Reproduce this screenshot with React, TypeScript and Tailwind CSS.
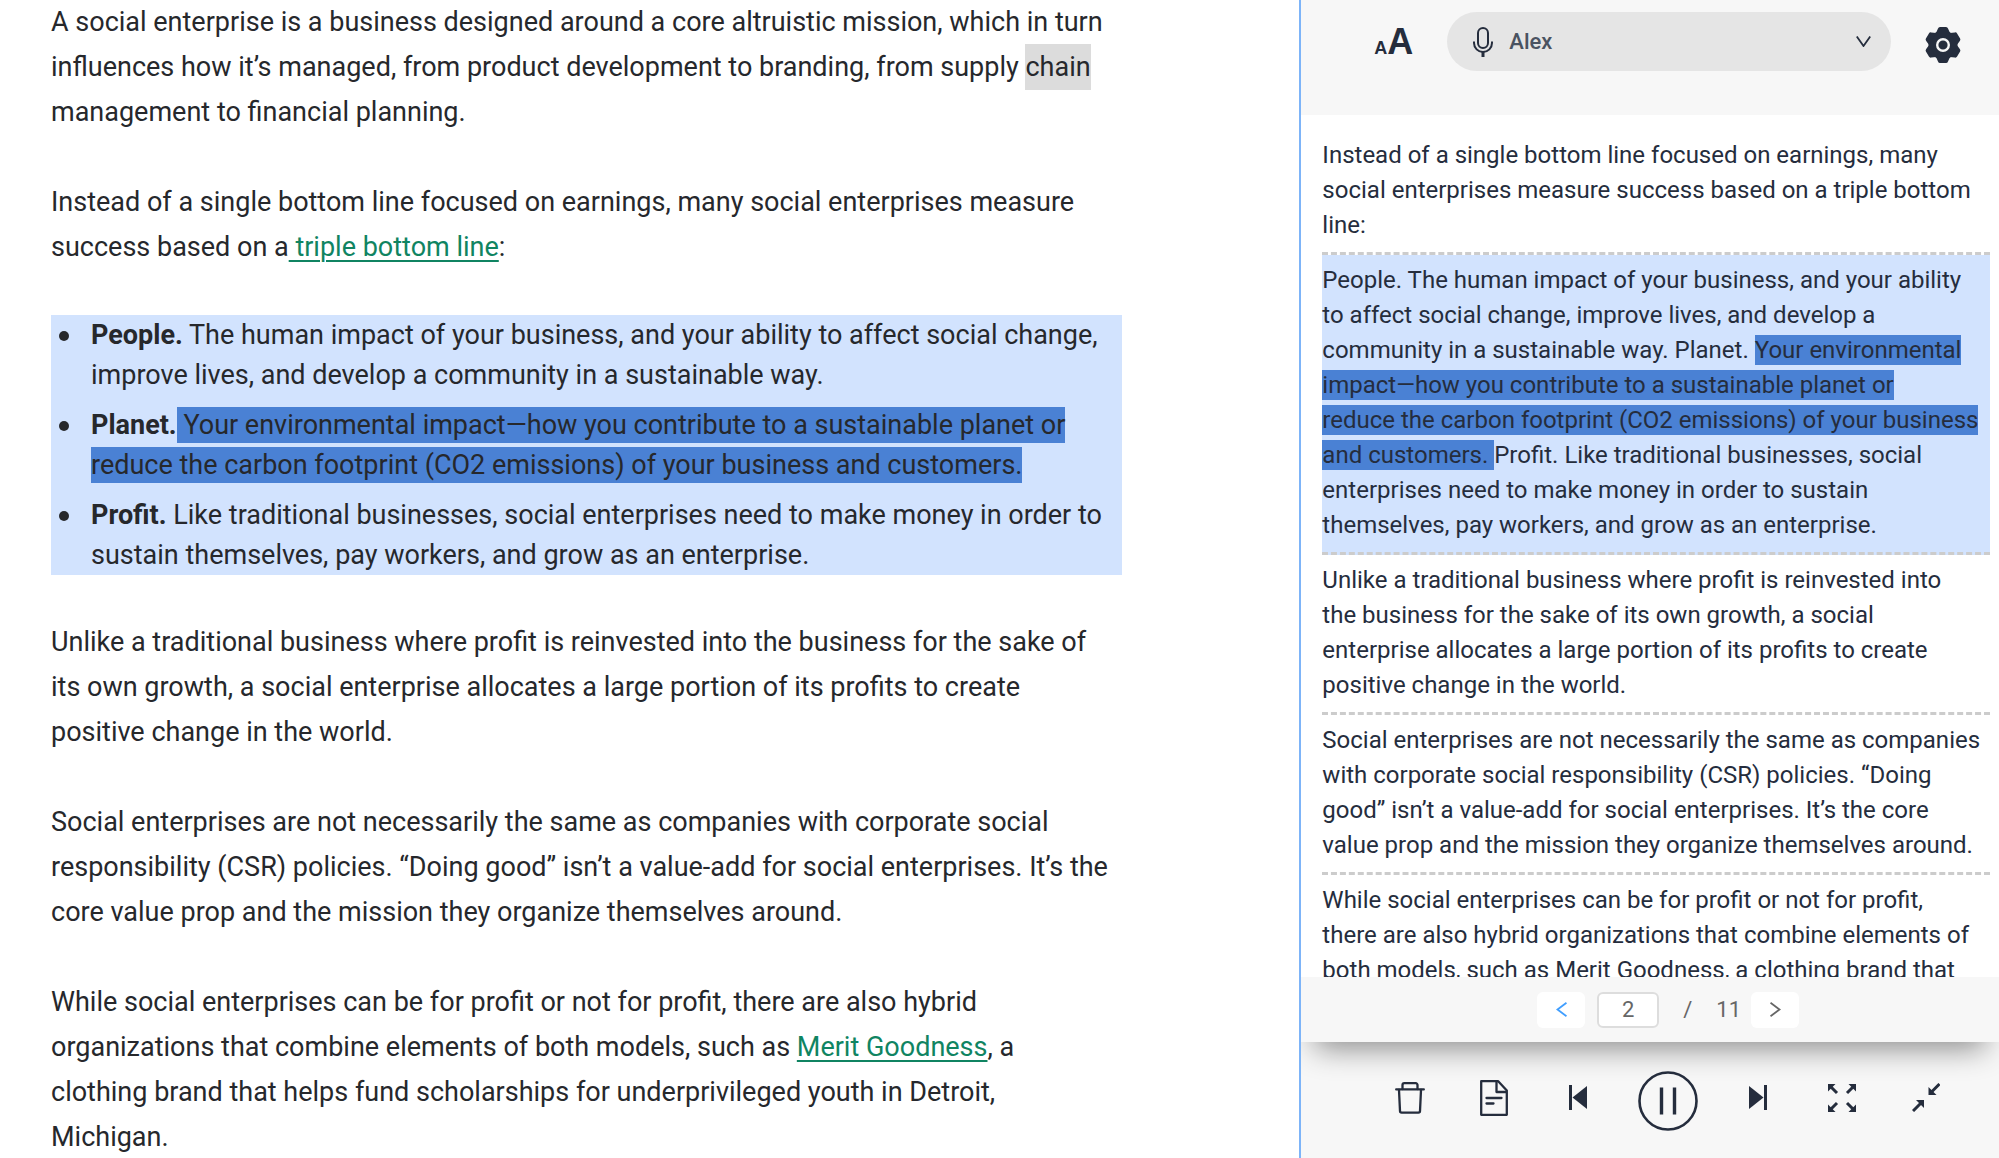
import React, { useState } from "react";

type ReaderBlock = {
    text: string;
    spoken?: string;
    rest?: string;
    active?: boolean;
};

const TOTAL_PAGES = 11;

const voices = ["Alex", "Samantha", "Victoria"];

// line breaks are kept by whitespace-pre-line in the list
const blocks: ReaderBlock[] = [
    {
        text: "Instead of a single bottom line focused on earnings, many\nsocial enterprises measure success based on a triple bottom\nline:",
    },
    {
        text: "People. The human impact of your business, and your ability\nto affect social change, improve lives, and develop a\ncommunity in a sustainable way. Planet. ",
        spoken: "Your environmental\nimpact—how you contribute to a sustainable planet or\nreduce the carbon footprint (CO2 emissions) of your business\nand customers. ",
        rest: "Profit. Like traditional businesses, social\nenterprises need to make money in order to sustain\nthemselves, pay workers, and grow as an enterprise.",
        active: true,
    },
    {
        text: "Unlike a traditional business where profit is reinvested into\nthe business for the sake of its own growth, a social\nenterprise allocates a large portion of its profits to create\npositive change in the world.",
    },
    {
        text: "Social enterprises are not necessarily the same as companies\nwith corporate social responsibility (CSR) policies. “Doing\ngood” isn’t a value-add for social enterprises. It’s the core\nvalue prop and the mission they organize themselves around.",
    },
    {
        text: "While social enterprises can be for profit or not for profit,\nthere are also hybrid organizations that combine elements of\nboth models, such as Merit Goodness, a clothing brand that",
    },
];

const linkStyle = "text-[#108462] underline decoration-2 underline-offset-4";
const bulletStyle = "flex before:ml-2 before:mr-[22px] before:mt-4 before:size-2.5 before:shrink-0 before:rounded-full before:bg-[#26282c]";
const toolButton = "flex h-[53px] w-12 items-center justify-center";

function MicIcon() {
    return (
        <svg width="20" height="30" viewBox="0 0 20 30" fill="none" stroke="currentColor" strokeWidth="2">
            <rect x="5" y="1" width="10" height="20" rx="5" />
            <path d="M1 14.5v1.5a9 9 0 0 0 18 0v-1.5" />
            <path d="M10 25v5" strokeWidth="3" />
        </svg>
    );
}

function GearIcon() {
    return (
        <svg width="36" height="36" viewBox="-18 -18 36 36" fill="currentColor">
            <circle r="14.5" />
            {[0, 60, 120, 180, 240, 300].map((angle) => (
                <path key={angle} d="M-7 -12L-5 -16.5Q-4.5 -18 -3 -18H3Q4.5 -18 5 -16.5L7 -12Z" transform={`rotate(${angle})`} />
            ))}
            <circle r="5.8" fill="none" stroke="#f7f7f7" strokeWidth="2.4" />
        </svg>
    );
}

function TrashIcon() {
    return (
        <svg width="30" height="32" viewBox="0 0 30 32" fill="none" stroke="currentColor" strokeWidth="2.3" strokeLinecap="round" strokeLinejoin="round">
            <path d="M1.2 7.4h27.6" />
            <path d="M7.5 7V3a1.8 1.8 0 0 1 1.8-1.8h11.4A1.8 1.8 0 0 1 22.5 3v4" />
            <path d="M4 8l1 21a1.6 1.6 0 0 0 1.6 1.6h16.8A1.6 1.6 0 0 0 25 29l1-21" />
        </svg>
    );
}

function DocumentIcon() {
    return (
        <svg width="28" height="36" viewBox="0 0 28 36" fill="none" stroke="currentColor" strokeWidth="2.3" strokeLinejoin="round">
            <path d="M1.2 1.2h17l8.6 9.3v24.3H1.2z" />
            <path d="M16.5 1.2v10.8h10.3" />
            <path d="M6.5 18h15M6.5 23.5h7" strokeLinecap="round" />
        </svg>
    );
}

function PreviousIcon() {
    return (
        <svg width="18" height="26" viewBox="0 0 18 26" fill="currentColor">
            <rect width="3" height="25" />
            <path d="M3.5 12.5L18 1v23z" />
        </svg>
    );
}

function NextIcon() {
    return (
        <svg width="18" height="26" viewBox="0 0 18 26" fill="currentColor">
            <rect x="15" width="3" height="25" />
            <path d="M14.5 12.5L0 1v23z" />
        </svg>
    );
}

function PauseIcon() {
    return (
        <svg width="60" height="60" viewBox="0 0 60 60" fill="none" stroke="currentColor">
            <circle cx="30" cy="30" r="28.5" strokeWidth="2.6" />
            <path d="M23.5 16.5v27M36.5 16.5v27" strokeWidth="3.4" />
        </svg>
    );
}

function ExpandIcon() {
    return (
        <svg width="28" height="28" viewBox="-14 -14 28 28" fill="currentColor">
            {[0, 90, 180, 270].map((angle) => (
                <g key={angle} transform={`rotate(${angle})`}>
                    <path d="M-14 -14h7.5l-7.5 7.5z" />
                    <path d="M-12 -12l7 7" stroke="currentColor" strokeWidth="3" />
                </g>
            ))}
        </svg>
    );
}

function CollapseIcon() {
    return (
        <svg width="28" height="29" viewBox="0 0 28 29" fill="currentColor">
            <path d="M16.5 12V4l8 8zM12 17v8l-8-8z" />
            <path d="M27.5 1l-9 9M1 28l9-9" stroke="currentColor" strokeWidth="3" />
        </svg>
    );
}

function Article() {
    return (
        <main className="flex min-w-0 flex-1 flex-col gap-[45px] pl-[51px] pr-[177px] text-[27px] leading-[45px] text-[#26282c]">
            <p className="pr-2.5">
                A social enterprise is a business designed around a core altruistic mission, which in turn influences how it’s
                managed, from product development to branding, from supply <mark className="bg-[#dcdcdc] py-[7px] text-inherit">chain</mark>{" "}
                management to financial planning.
            </p>
            <p className="pr-2.5">
                Instead of a single bottom line focused on earnings, many social enterprises measure success based on a
                <a href="#triple-bottom-line" className={linkStyle}> triple bottom line</a>:
            </p>
            <ul className="flex flex-col gap-2.5 bg-[#d2e3fe] leading-10">
                <li className={bulletStyle}>
                    <p>
                        <strong>People.</strong> The human impact of your business, and your ability to affect social change,
                        improve lives, and develop a community in a sustainable way.
                    </p>
                </li>
                <li className={bulletStyle}>
                    <p>
                        <strong>Planet.</strong>
                        <mark className="bg-[#4a81d4] py-0.5 text-inherit"> Your environmental impact—how you contribute to a sustainable planet or reduce the carbon footprint (CO2 emissions) of your business and customers.</mark>
                    </p>
                </li>
                <li className={bulletStyle}>
                    <p>
                        <strong>Profit.</strong> Like traditional businesses, social enterprises need to make money in order to
                        sustain themselves, pay workers, and grow as an enterprise.
                    </p>
                </li>
            </ul>
            <p className="pr-2.5">
                Unlike a traditional business where profit is reinvested into the business for the sake of its own growth, a
                social enterprise allocates a large portion of its profits to create positive change in the world.
            </p>
            <p className="pr-2.5">
                Social enterprises are not necessarily the same as companies with corporate social responsibility (CSR)
                policies. “Doing good” isn’t a value-add for social enterprises. It’s the core value prop and the mission they
                organize themselves around.
            </p>
            <p className="pr-2.5">
                While social enterprises can be for profit or not for profit, there are also hybrid organizations that combine
                elements of both models, such as{" "}
                <a href="#merit-goodness" className={linkStyle}>Merit Goodness</a>, a
                clothing brand that helps fund scholarships for underprivileged youth in Detroit, Michigan.
            </p>
        </main>
    );
}

export default function App() {
    const [voice, setVoice] = useState("Alex");
    const [page, setPage] = useState("2");

    const goTo = (next: number) => {
        if (next < 1 || next > TOTAL_PAGES) return;
        setPage(String(next));
    };

    return (
        <div className="flex h-screen overflow-hidden bg-white font-[Roboto,sans-serif]">
            <Article />

            <aside className="flex w-[35%] flex-col overflow-hidden border-l-2 border-[#7db4f8] bg-[#f7f7f7] text-[#252d3d]">
                <header className="flex h-[115px] shrink-0 items-start gap-[34px] pl-[73px] pr-[38px] pt-3">
                    <button type="button" aria-label="Text size" className="flex h-[60px] items-center font-['Liberation_Sans',sans-serif] font-bold">
                        <span className="flex items-baseline leading-none">
                            <span className="text-[18px]">A</span>
                            <span className="text-[36px]">A</span>
                        </span>
                    </button>
                    <div className="relative min-w-0 flex-1">
                        <span className="pointer-events-none absolute inset-y-0 left-[26px] flex items-center">
                            <MicIcon />
                        </span>
                        <select
                            aria-label="Voice"
                            value={voice}
                            onChange={(e) => setVoice(e.target.value)}
                            className="h-[59px] w-full appearance-none rounded-full bg-[#e5e5e5] pl-[62px] pr-12 text-[22px] font-medium text-[#4a5361]"
                        >
                            {voices.map((v) => <option key={v} value={v}>{v}</option>)}
                        </select>
                        <span className="pointer-events-none absolute inset-y-0 right-5 flex items-center">
                            <svg width="15" height="11" viewBox="0 0 15 11" fill="none" stroke="currentColor" strokeWidth="1.8">
                                <path d="M.8.5l6.7 9.5 6.7-9.5" />
                            </svg>
                        </span>
                    </div>
                    <button type="button" aria-label="Settings" className="flex h-[66px] items-center">
                        <GearIcon />
                    </button>
                </header>

                <section className="min-h-0 flex-1 overflow-hidden whitespace-pre-line bg-white pl-[21px] pr-[9px] pt-[15px] text-2xl leading-[35px]">
                    {blocks.map((block) => (
                        <p
                            key={block.text}
                            className={`border-b-[3px] border-dashed border-[#cccccc] pt-2 pb-[9px] ${block.active ? "bg-[#d2e3fe]" : ""}`}
                        >
                            {block.text}
                            {block.spoken && <mark className="bg-[#4a81d4] py-px text-inherit">{block.spoken}</mark>}
                            {block.rest}
                        </p>
                    ))}
                </section>

                <nav
                    aria-label="Pages"
                    className="relative flex h-[65px] shrink-0 items-center justify-center bg-[#f7f7f7] pl-9 text-[22px] text-[#666666] shadow-[0_20px_30px_-14px_rgba(0,0,0,0.45)]"
                >
                    <button
                        type="button"
                        aria-label="Previous page"
                        onClick={() => goTo(Number(page) - 1)}
                        className="flex h-9 w-12 items-center justify-center rounded-md bg-white text-[#409eff]"
                    >
                        <svg width="11" height="15" viewBox="0 0 11 15" fill="none" stroke="currentColor" strokeWidth="1.8">
                            <path d="M10.5.8L1.5 7.5l9 6.7" />
                        </svg>
                    </button>
                    <input
                        aria-label="Page number"
                        value={page}
                        onChange={(e) => setPage(e.target.value)}
                        className="ml-3 h-9 w-[62px] rounded-md border-2 border-[#dddddd] bg-white text-center"
                    />
                    <span className="mx-6">/</span>
                    <span>{TOTAL_PAGES}</span>
                    <button
                        type="button"
                        aria-label="Next page"
                        onClick={() => goTo(Number(page) + 1)}
                        className="ml-2.5 flex h-9 w-12 items-center justify-center rounded-md bg-white"
                    >
                        <svg width="11" height="15" viewBox="0 0 11 15" fill="none" stroke="currentColor" strokeWidth="1.8">
                            <path d="M.5.8l9 6.7-9 6.7" />
                        </svg>
                    </button>
                </nav>

                <footer className="flex h-[116px] shrink-0 items-start justify-center gap-9 pl-9 pt-[29px]">
                    <button type="button" aria-label="Delete" className={toolButton}><TrashIcon /></button>
                    <button type="button" aria-label="Document" className={toolButton}><DocumentIcon /></button>
                    <button type="button" aria-label="Previous" className={toolButton}><PreviousIcon /></button>
                    <button type="button" aria-label="Pause"><PauseIcon /></button>
                    <button type="button" aria-label="Next" className={toolButton}><NextIcon /></button>
                    <button type="button" aria-label="Full screen" className={toolButton}><ExpandIcon /></button>
                    <button type="button" aria-label="Collapse" className={toolButton}><CollapseIcon /></button>
                </footer>
            </aside>
        </div>
    );
}
